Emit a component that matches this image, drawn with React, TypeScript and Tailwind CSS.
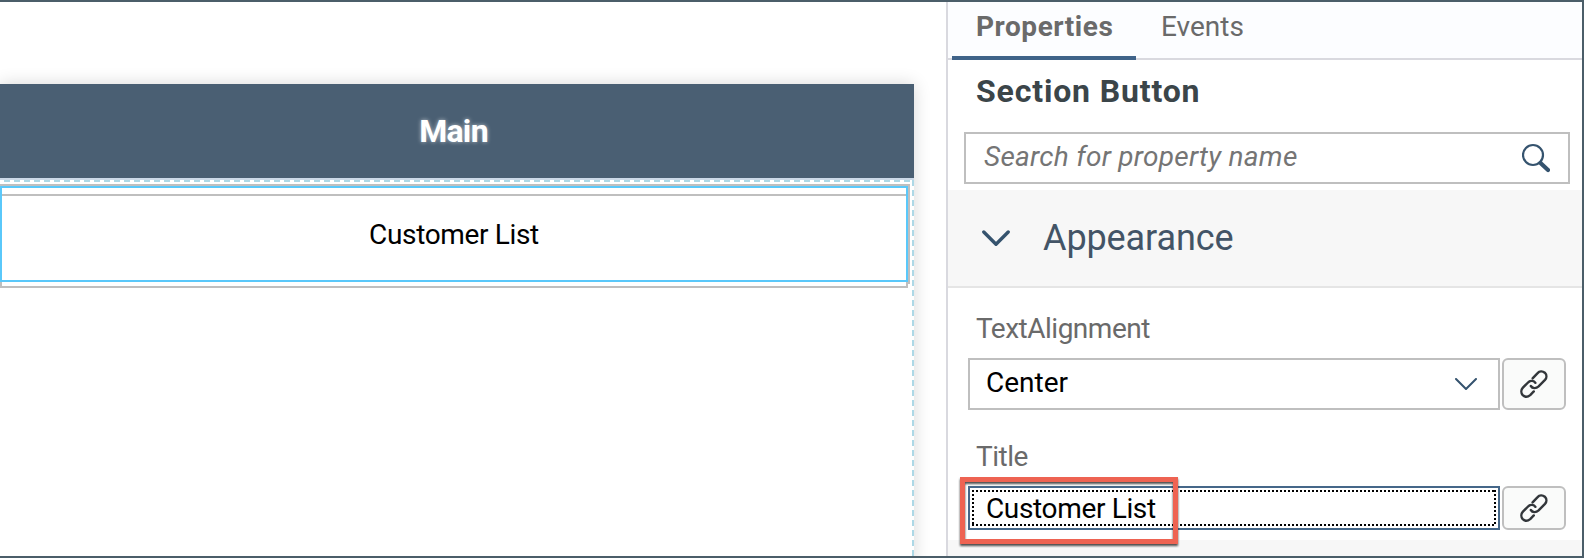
import type { ReactNode } from "react";

function LinkIcon() {
  return (
    <svg width="28" height="28" viewBox="0 0 28 28" fill="none" stroke="#32363a" strokeWidth="2.4" strokeLinecap="round" strokeLinejoin="round">
      <path d="M12.6 8.4 L17.6 3.1 C19.4 1.1 22.6 0.9 24.8 2.7 C27 4.9 26.8 7.9 25 9.9 L18.6 16.4 C16 18.8 12.4 18.6 10.8 16" />
      <path d="M15.4 12.8 C14 10.6 10.8 10.2 8.6 12 L2.9 17.6 C0.9 19.8 0.9 23 2.7 25.1 C4.9 27.1 8 26.9 10.2 25.1 L13.8 21.4" />
    </svg>
  );
}

function LinkButton() {
  return (
    <button className="ml-[2px] flex w-16 items-center justify-center self-stretch rounded-[6px] border-2 border-[#bfbfbf] bg-[#fafbfa]">
      <LinkIcon />
    </button>
  );
}

function Field({ label, children }: { label: string; children: ReactNode }) {
  return (
    <div>
      <div className="pl-[8px] text-[28px] leading-[34px] tracking-[-0.5px] text-[#6a6a6a]">{label}</div>
      {children}
    </div>
  );
}

function Canvas() {
  return (
    <section className="relative w-[946px] shrink-0 overflow-hidden pt-[82px]">
      <div className="flex h-[480px] w-[914px] flex-col bg-white shadow-[0_0_16px_rgba(0,0,0,0.16)]">
        <header className="flex h-[94px] shrink-0 items-center justify-center bg-[#4a5f73] pr-[7px] text-[32px] font-bold tracking-[-0.7px] text-white [text-shadow:0_0_4px_rgba(255,255,255,0.6)]">
          Main
        </header>
        <div className="h-[2px] shrink-0 bg-[#ccd9e8]" />
        <div className="relative grow">
          <svg className="pointer-events-none absolute inset-0" width="914" height="384" fill="none" stroke="#add8e6" strokeWidth="2" strokeDasharray="6 4">
            <path d="M4 1 H914" />
            <path d="M913 0 V384" />
          </svg>
          <div className="pt-[14px]">
            <button className="flex h-[94px] w-[908px] items-center justify-center border-2 border-[#bfbfbf] pb-[12px] text-[28px] tracking-[-0.35px] text-black">
              Customer List
            </button>
          </div>
          <div className="pointer-events-none absolute left-0 top-[4px] h-[100px] w-[910px] border-r-2 border-t-2 border-[#bfbfbf]" />
          <div className="pointer-events-none absolute left-0 top-[6px] h-[96px] w-[908px] border-2 border-[#5ac8fa]" />
        </div>
      </div>
    </section>
  );
}

function Properties() {
  return (
    <aside className="relative flex grow flex-col overflow-hidden border-l-2 border-[#d9d9df] bg-white">
      <nav className="flex h-[58px] shrink-0 border-b-2 border-[#d9d9df] bg-[#fcfdff] pl-1 text-[28px] leading-[34px] text-[#6a6a6a]">
        <div className="relative z-10 -mb-[2px] w-[184px] border-b-4 border-[#3f6389] pl-[24px] pt-[8px] font-bold tracking-[0.55px]">Properties</div>
        <div className="pl-[25px] pt-[8px]">Events</div>
      </nav>
      <h2 className="h-[72px] shrink-0 pl-[28px] pt-[12px] text-[32px] font-bold leading-[38px] tracking-[0.85px] text-[#3b4549]">Section Button</h2>
      <div className="mx-4 mr-3 flex h-[52px] shrink-0 items-center border-2 border-[#bfbfbf] pl-[18px] pr-[18px]">
        <span className="grow pb-[2px] text-[28px] italic leading-[34px] tracking-[0.27px] text-[#757575]">Search for property name</span>
        <svg width="28" height="30" viewBox="0 0 28 30" fill="none" stroke="#35536e" strokeLinecap="round">
          <circle cx="11" cy="12" r="10" strokeWidth="2.2" />
          <path d="M18.5 20 L26 27" strokeWidth="4.2" />
        </svg>
      </div>
      <div className="mt-[6px] flex h-[98px] shrink-0 items-center border-b-2 border-[#e5e5e5] bg-[#f7f7f7] pl-[34px]">
        <svg width="28" height="16" viewBox="0 0 28 16" fill="none" stroke="#35536e" strokeWidth="3.4" strokeLinecap="round" strokeLinejoin="round">
          <path d="M1.8 2 L14 14.2 L26.2 2" />
        </svg>
        <span className="pl-[33px] text-[36px] leading-[42px] tracking-[-0.1px] text-[#435466]">Appearance</span>
      </div>
      <div className="flex shrink-0 flex-col gap-[30px] pl-5 pt-[24px]">
        <Field label="TextAlignment">
          <div className="mt-[12px] flex h-[52px]">
            <div className="flex w-[532px] items-center border-2 border-[#bfbfbf] pl-[16px] pr-[21px]">
              <span className="grow pb-[2px] text-[28px] leading-[34px] text-black">Center</span>
              <svg width="22" height="12" viewBox="0 0 22 12" fill="none" stroke="#35536e" strokeWidth="2" strokeLinecap="round" strokeLinejoin="round">
                <path d="M1 1 L11 11 L21 1" />
              </svg>
            </div>
            <LinkButton />
          </div>
        </Field>
        <Field label="Title">
          <div className="relative mt-[12px] flex h-[44px]">
            <div className="relative flex w-[532px] items-center border-2 border-[#456789] pl-[16px]">
              <span className="pt-[2px] text-[28px] leading-[34px] tracking-[-0.35px] text-black">Customer List</span>
              <svg className="pointer-events-none absolute left-[2px] top-[2px]" width="524" height="36" fill="none" stroke="#000" strokeWidth="2" strokeDasharray="2 2">
                <path d="M0 1 H524" />
                <path d="M0 35 H524" />
                <path d="M1 0 V36" />
                <path d="M523 0 V36" />
              </svg>
            </div>
            <LinkButton />
            <div className="pointer-events-none absolute -left-[8px] -top-[9px] h-[67px] w-[218px] border-5 border-[#ee6352] drop-shadow-[0_2px_1px_rgba(0,0,0,0.7)]" />
          </div>
        </Field>
      </div>
      <div className="mt-[10px] h-[20px] shrink-0 bg-[#f7f7f7]" />
    </aside>
  );
}

export default function App() {
  return (
    <main className="flex h-[558px] w-[1584px] overflow-hidden border-y-2 border-r-2 border-[#4b5e69] bg-white font-['Roboto',sans-serif]">
      <Canvas />
      <Properties />
    </main>
  );
}
